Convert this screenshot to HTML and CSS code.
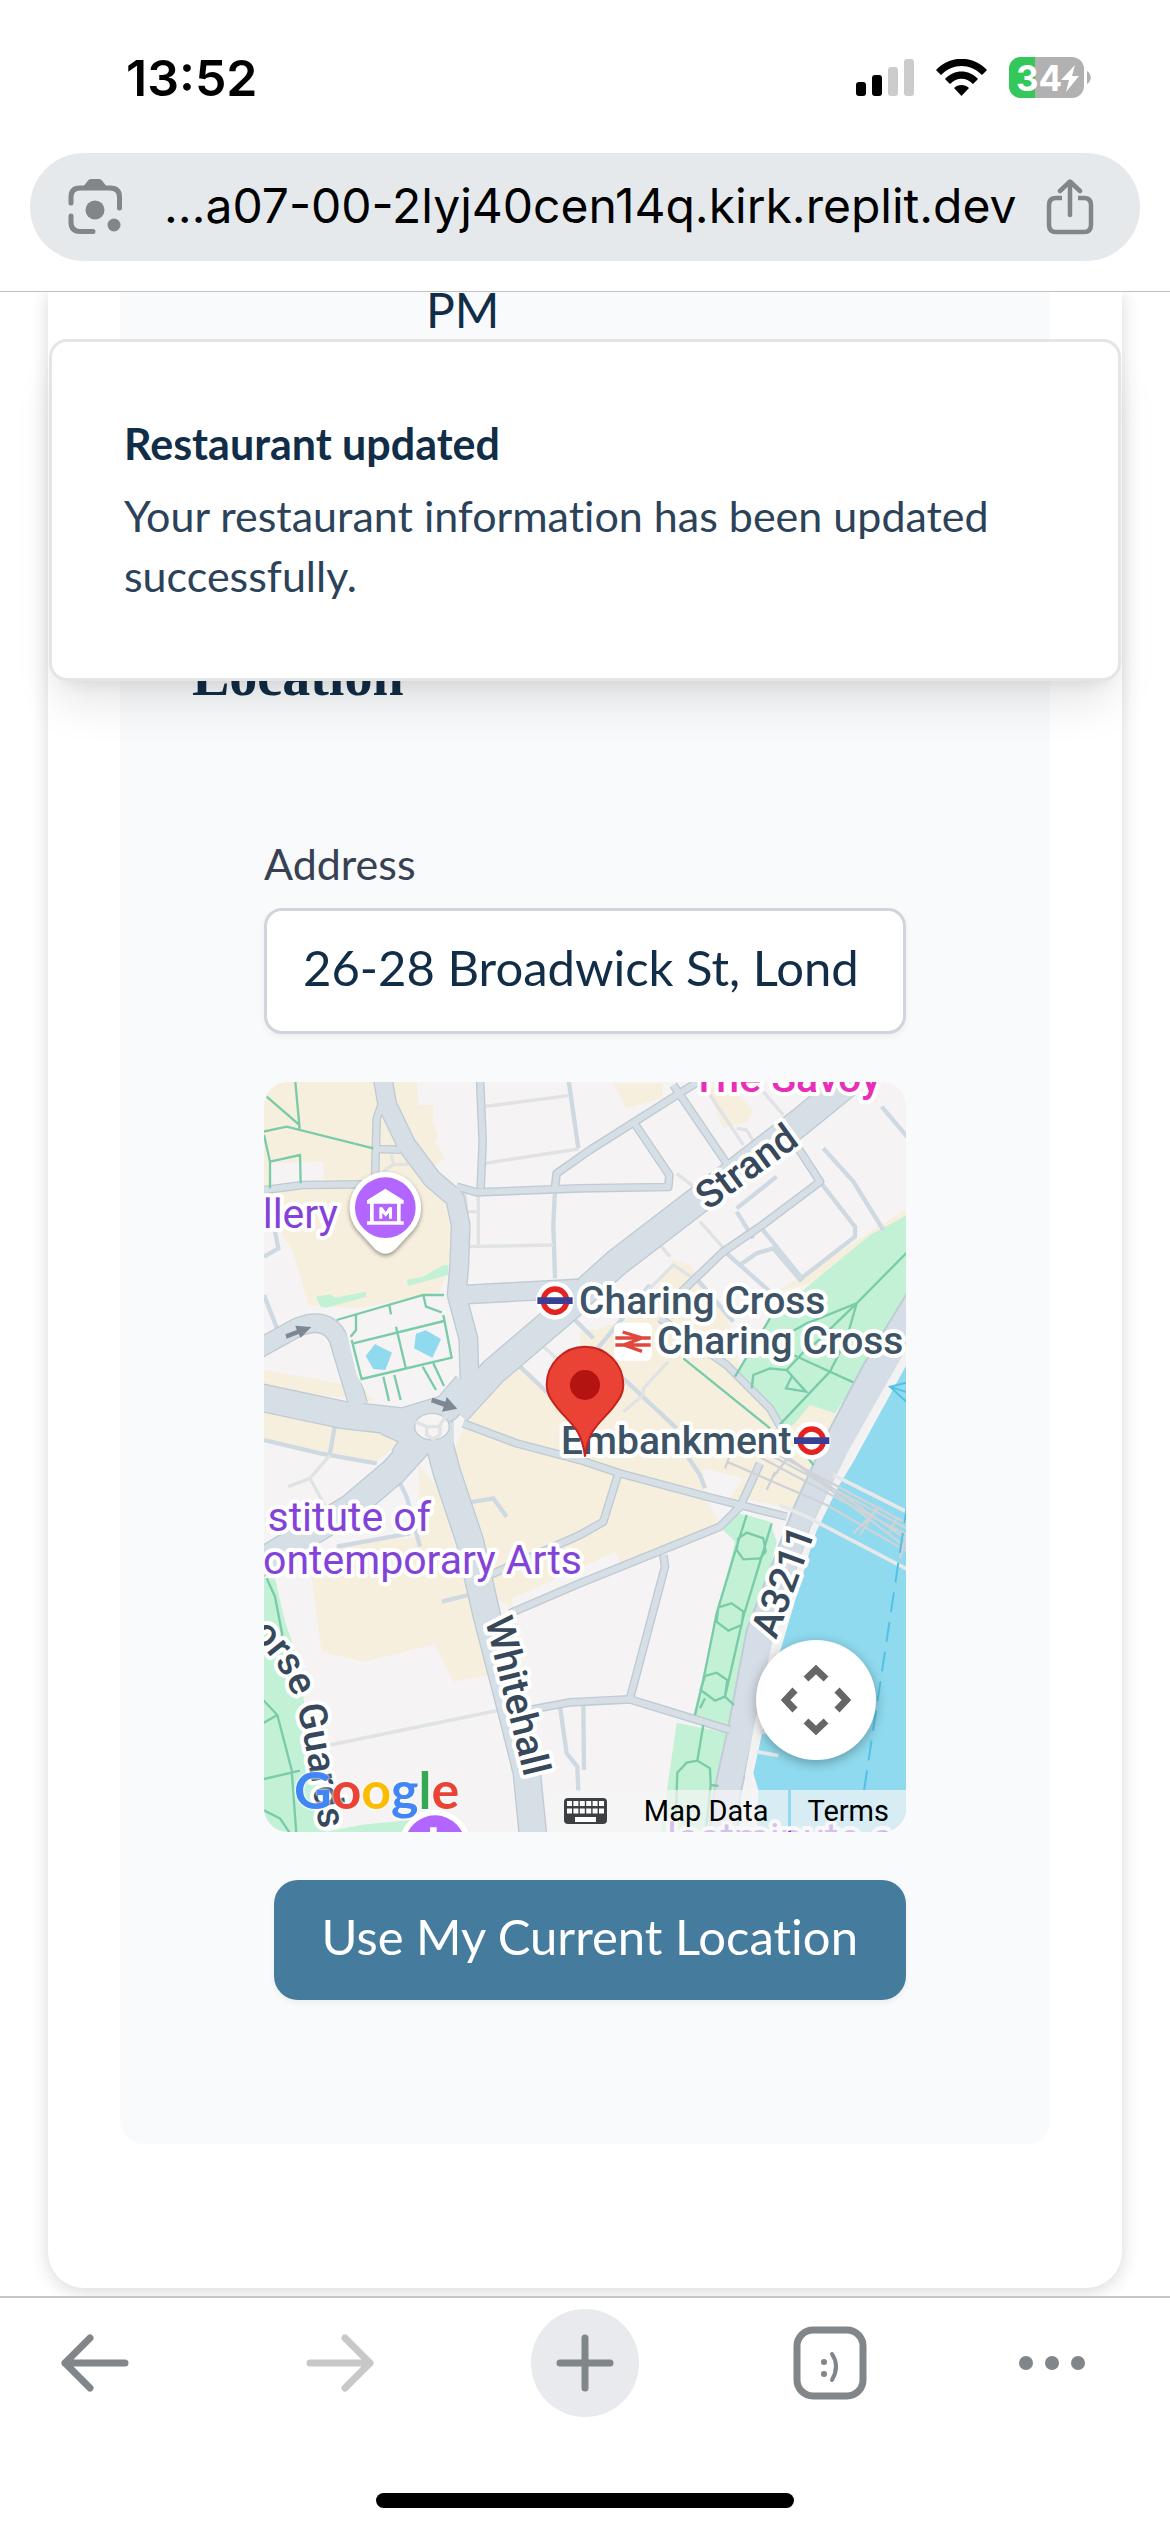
FILE: index.html
```
<!DOCTYPE html>
<html lang="en">
<head>
<meta charset="utf-8">
<meta name="viewport" content="width=device-width, initial-scale=1">
<title>Restaurant settings</title>
<link rel="stylesheet" href="styles.css">
</head>
<body>
<div class="screen">
  <header class="top">
    <div class="status">
      <time class="clock">13:52</time>
      <div class="status-icons">
        <svg width="58" height="38" viewBox="0 0 58 38" aria-label="Signal">
          <rect x="0" y="23" width="10" height="14" rx="3"/><rect x="16" y="16" width="10" height="21" rx="3"/>
          <rect x="32" y="8" width="10" height="29" rx="3" fill="#cccccc"/><rect x="48" y="0" width="10" height="37" rx="3" fill="#cccccc"/>
        </svg>
        <svg width="51" height="38" viewBox="0 0 51 38" aria-label="Wi-Fi">
          <path d="M0 11C14-4 37-4 51 11L46 16C34 4 17 4 5 16Z"/>
          <path d="M9 20C18 10 33 10 42 20L37 25C30 18 21 18 14 25Z"/>
          <path d="M18 29C22 25 29 25 33 29L25.500 37Z"/>
        </svg>
        <svg width="82" height="42" viewBox="0 0 82 42" aria-label="Battery 34 percent">
          <defs><clipPath id="cell"><rect width="75" height="41" rx="12"/></clipPath></defs>
          <g clip-path="url(#cell)"><rect width="75" height="41" fill="#b1b1b1"/><rect width="26" height="41" fill="#34c759"/></g>
          <path d="M78 14C83 17 83 24 78 27Z" fill="#b1b1b1"/>
          <text class="charge" x="7" y="34">34</text>
          <path d="M66 8L52 23H60L57 35L70 19H63Z" fill="#fff"/>
        </svg>
      </div>
    </div>
    <div class="address-bar">
      <button class="icon-button" type="button" aria-label="Search with camera">
        <svg width="54" height="56" viewBox="0 0 54 56" fill="none" stroke="#80868a" stroke-width="5" stroke-linecap="round">
          <path d="M3 24V18Q3 9 12 9H42Q51.500 9 51.500 18V29M3 37V43Q3 52.500 12 52.500H25"/>
          <path d="M15 8L20 1.500Q21 0 23 0H31Q33 0 34 1.500L39 8Z" fill="#80868a" stroke="none"/>
          <circle cx="27" cy="31" r="9.500" fill="#80868a" stroke="none"/><circle cx="46" cy="46" r="6.500" fill="#80868a" stroke="none"/>
        </svg>
      </button>
      <input class="url" type="text" aria-label="Address and search bar" value="…a07-00-2lyj40cen14q.kirk.replit.dev" readonly>
      <button class="icon-button" type="button" aria-label="Share">
        <svg width="48" height="57" viewBox="0 0 48 57" fill="none" stroke="#80868a" stroke-width="4.500">
          <path d="M16 19H10Q3 19 3 26V46Q3 53 10 53H38Q45 53 45 46V26Q45 19 38 19H32"/>
          <path d="M24 36V4M14 12L24 2.500L34 12" stroke-linecap="round" stroke-linejoin="round"/>
        </svg>
      </button>
    </div>
  </header>

  <main class="page">
    <div class="toast" role="status">
      <strong class="toast-title">Restaurant updated</strong>
      <p class="toast-text">Your restaurant information has been updated successfully.</p>
    </div>
    <section class="card">
      <div class="panel">
        <p class="hours">PM</p>
        <h2 class="heading">Location</h2>
        <form class="form">
          <div class="field">
            <label class="label" for="address">Address</label>
            <input class="input" id="address" type="text" value="26-28 Broadwick St, Lond">
          </div>
          <div class="map">
            <svg class="map-art" viewBox="4 7 642 750" preserveAspectRatio="xMidYMid slice" role="img" aria-label="Map of Charing Cross">
              <defs>
                <g id="roads" fill="none" stroke-linejoin="round" stroke-linecap="butt">
                  <g class="r1">
                    <path d="M368 10L382 90L440 210L515 310L585 370L602 450L598 570L590 660L625 790L630 960"/>
                    <path d="M590 660L960 640"/>
                    <path d="M-20 830L110 758Q200 720 235 790L295 990"/>
                  </g>
                  <g class="r2">
                    <path d="M590 1010L700 890L960 668"/><path d="M940 680L1070 563L1620 141L1780 10"/>
                    <path d="M520 1040L560 1190L630 1400L680 1620L750 1890L800 2090L820 2290"/>
                    <path d="M500 1080L400 1190L270 1300L-10 1470"/><path d="M470 1090L430 1150"/>
                    <path d="M-10 965L250 1020L430 1040L560 1000L620 930"/><path d="M380 1040L470 1080L580 1080"/>
                  </g>
                  <g class="r3">
                    <path d="M345 310L350 130L375 60M660 10L668 200L662 340M590 335L650 352L960 340L1225 336L1228 300L1120 140M885 335L890 295L990 225L1330 10M1240 30L1400 265M1615 220L1680 320L1500 455L1390 530L1265 650M-10 348L130 330L310 328M345 222L420 224"/>
                    <path d="M1200 730L1400 870L1530 1000L1570 1070M610 1045L770 1105L960 1155L1080 1195L1340 1265L1580 1325M1075 1195L1030 1340L960 1380L690 1500M1500 1165L1440 1295L1380 1355L960 1525L750 1615M1210 1440L1215 1475L1110 1870M780 1910L930 1882L1110 1873L1410 1965"/>
                  </g>
                </g>
              </defs>
              <g transform="scale(.333333)">
                <path class="land" d="M0 0H1950V2300H0Z"/>
                <path class="sand" d="M0 0H470L475 90H520V140L535 185L525 200L555 250L520 275L575 450L570 570L540 650L300 700L145 690L120 600L95 520L65 480L60 350L0 345Z"/>
                <path class="land" d="M30 265L190 260V320L40 335Z"/>
                <path class="sand" d="M12 885L350 945L340 980L12 940ZM0 1005L360 1075L430 1090L340 1170L0 1100Z"/>
                <path class="sand" d="M770 865L850 940L960 900L960 780L1140 720L1240 555L1290 570L1400 720L1440 880L1560 1040L1660 980L1730 1010L1600 1300L1440 1270L1370 1310L1375 1350L1080 1465L1065 1430L960 1480L755 1570L760 1600L690 1560L560 1180L600 1080L640 1020Z"/>
                <path class="sand" d="M475 1170L530 1235L620 1525L690 1800L580 1820L525 1708L310 1760L185 1730L155 1510L240 1410L480 1385Z"/>
                <path class="sand" d="M1060 25H1210L1205 70L1100 100ZM1340 40L1400 30L1480 105L1460 140L1390 160ZM1950 395L1550 650L1660 625L1950 430ZM955 770L1000 760L1020 800L980 810ZM250 1125H340V1150H250Z"/>
                <path class="land" d="M1330 1180L1450 1210L1370 1330L1330 1260ZM1190 1070L1290 1050L1330 1110L1220 1130Z"/>
                <path class="park" d="M1950 415L1830 480L1660 620L1540 720L1425 910L1535 1010L1560 1060L1600 1050L1650 990L1725 1015L1830 860L1950 680Z"/>
                <path class="park" d="M1420 1310L1390 1365L1425 1400L1300 1920L1410 1960L1550 1400L1530 1340ZM1250 1943L1405 1975L1340 2290H1200Z"/>
                <path class="park" d="M0 1510H45L75 1640L110 1740L135 1900L170 2030L200 2280H0ZM200 2270L300 2250L450 2235V2290H200ZM168 665L210 658L225 668L318 650V665L200 698L182 695ZM440 615L490 605L550 570H565V600L445 633Z"/>
                <path class="thin" d="M12 545L55 520L45 470M925 10L955 220M885 345L880 450L885 610M1430 410L1480 490M1550 305L1430 400M1505 460L1630 615M1630 605L1785 485V455L1680 320M1440 570L1490 535L1540 520L1625 620M1400 535L1530 650M1865 95L1950 195M12 1095L180 1135L350 1165M225 1050L210 1135M610 1285L700 1270L740 1325M545 1580L625 1560M230 1415L450 1375M420 1225L440 1265L480 1415M900 1895L920 2035L952 2075L955 2150M970 1890L972 2085M12 660L55 770M770 865L870 960M1690 220L1780 320L1870 465M1090 910L1250 1060M1170 630L980 860M1080 1070L1140 1125M1270 1125L1320 1200L1335 1240M940 730L1000 790M1300 600L1420 740"/>
                <path class="alley" d="M670 95L925 62M675 265L955 222M620 515L880 510M655 350V515M615 350L620 410H655M1320 440L1400 530M1350 60L1450 210M1510 50L1570 120M1200 510L1230 545M1160 650L1240 570L1300 610M1225 860L1150 940V960L1090 1010M210 2010L720 1905M85 1235L150 1210L220 1340M150 1210L210 1140M840 805L900 860M395 240L400 268H445M370 290L400 268M1250 295L1320 350M1430 160L1460 165L1480 200"/>
                <path class="water" d="M1950 850L1780 1160L1680 1325L1560 1730L1480 2095L1495 2145L1490 2290H1950Z"/>
                <path class="quay" d="M1950 640L1810 870L1705 1070L1600 1300L1460 1665L1405 1955L1365 2135L1345 2290H1430L1440 2165L1485 1955L1540 1695L1650 1365L1770 1125L1950 810Z"/>
                <path class="bank" d="M1950 822L1775 1130L1660 1365L1548 1695L1492 1955L1465 2100V2290"/>
                <use href="#roads" class="casing"/>
                <use href="#roads" class="fill"/>
                <path class="land" d="M250 735L490 665H555L590 850L560 930L470 965L330 970L290 900Z"/>
                <ellipse cx="516" cy="1055" rx="52" ry="40" fill="#f5f3f4" stroke="#bfcad2" stroke-width="4"/>
                <path class="alley" d="M466 1040L500 1055L500 1080L520 1092L540 1078V1050L560 1020M500 1055H540"/>
                <path class="pool" d="M345 807L396 833L376 885L340 882L317 843ZM497 766L543 792L517 848L462 820L468 776Z"/>
                <path class="walk" d="M105 10L118 150L20 65M118 150V165M0 172L80 155L340 220M12 180L30 260V340M30 260L120 240L122 325M230 735L490 660H552M280 805L552 738M275 795L305 912L575 848L550 720M408 755L438 882M370 905L387 978M403 900L422 975M488 875L528 945M520 865L552 933M388 690L393 718M288 718V765L272 785M490 660L498 695L545 712"/>
                <path class="walk" d="M1950 523L1790 685L1640 745L1560 790M1790 685L1650 820M1790 685L1760 790L1710 890L1560 1048M1600 840L1780 922M1270 850L1530 1060M1530 730L1425 905M1475 940L1480 900L1530 880L1580 885L1638 950L1578 940L1595 905M1580 885L1660 800M1600 1090L1660 1170"/>
                <path class="walk" d="M1460 1320L1430 1415L1370 1615L1330 1815L1305 1920M1535 1345L1505 1445L1450 1625L1395 1865M1460 1373L1510 1390L1517 1430L1500 1450L1450 1453L1430 1425L1435 1390ZM1415 1585L1450 1610L1445 1650L1405 1667L1370 1640L1375 1597ZM1370 1793L1402 1815L1395 1865L1365 1877L1322 1845L1335 1803ZM1335 1870L1320 1900M1395 1865L1422 1890M1330 1950L1312 2057L1350 2080L1352 2130L1375 2133M1312 2057L1280 2063L1252 2093L1245 2290M1352 2130L1335 2290"/>
                <path class="walk" d="M20 1510L45 1565L70 1695M0 1865L52 1920L95 2085L110 2290M0 1950L52 1920M0 2115L120 2087M0 2200L60 2230L100 2290"/>
                <path class="rail" d="M1450 1120L1950 1385M1475 1110L1950 1365M1500 1110L1950 1350M1530 1110L1950 1400M1560 1130L1950 1425M1400 1160L1700 1290L1950 1435M1395 1180L1410 1140M1520 1245L1545 1190M1540 1205L1590 1140M1780 1375L1860 1295M1800 1380L1850 1300M1890 1370L1910 1330M1920 1450L1940 1380"/>
                <path class="bridge" d="M1720 1200L1950 1315M1560 1290L1640 1325L1950 1487M1490 2030L1555 2042M1500 1970L1540 1975"/>
                <path d="M1942 1285L1810 2160" fill="none" stroke="#54c1e4" stroke-width="6" stroke-dasharray="60 30"/>
                <path d="M1950 920L1890 935L1950 990M1890 935L1950 955" fill="none" stroke="#54c1e4" stroke-width="6"/>
                <path fill="#7d8893" d="M76 778L110 765L106 752L154 756L122 788L116 777L80 791ZM517 968L556 980L560 966L592 1001L546 1010L551 995L513 982Z"/>
                <g class="pin-shadow">
                  <path d="M376 291A107 107 0 0 0 290 462L345 522Q376 550 407 522L462 462A107 107 0 0 0 376 291Z" fill="#fff"/>
                </g>
                <circle cx="376" cy="398" r="91" fill="#b366ff"/>
                <path d="M376 341L431 376V386H321V376ZM321 439H431V449H321ZM330 386H341V439H330ZM411 386H422V439H411ZM358 431V397H367L377 411L387 397H396V431H387V413L377 425L367 413V431Z" fill="#fff"/>
                <circle cx="525" cy="2312" r="108" fill="#fff"/><circle cx="525" cy="2312" r="91" fill="#b366ff"/><path d="M510 2257H530V2280H510Z" fill="#fff"/>
                <g id="tube"><circle cx="885" cy="677" r="57" fill="#fff"/><circle cx="885" cy="677" r="35" fill="none" stroke="#e5221f" stroke-width="16"/><path d="M832 667H938V687H832Z" fill="#393f94"/></g>
              </g>
              <g class="labels">
                <text class="place" x="78" y="153" text-anchor="end">llery</text>
                <text class="place" x="171" y="456" text-anchor="end">stitute of</text>
                <text class="place" x="322" y="499" text-anchor="end">ontemporary Arts</text>
                <text class="place" x="407" y="777">lastminute.com</text>
                <text class="hotel" x="621" y="17" text-anchor="end">The Savoy</text>
                <text class="station" x="319" y="239">Charing Cross</text>
                <text class="station" x="397" y="279">Charing Cross</text>
                <text class="station" x="301" y="379">Embankment</text>
                <text class="street" transform="translate(448 136) rotate(-36)">Strand</text>
                <text class="street" transform="translate(225 545) rotate(76)">Whitehall</text>
                <text class="street" transform="translate(516 565) rotate(-70)">A3211</text>
                <path id="guards" d="M-10 560C12 580 28 602 37 632C46 667 50 700 66 790" fill="none"/>
                <text class="street"><textPath href="#guards">orse Guards Rd</textPath></text>
              </g>
              <g transform="scale(.333333)">
                <use href="#tube" x="770" y="420"/>
                <rect x="1062" y="743" width="114" height="114" rx="18" fill="#fff"/>
                <path d="M1066 789H1172M1066 810H1172M1088 771L1146 789L1092 810L1146 829" fill="none" stroke="#e0483e" stroke-width="10"/>
                <path d="M975 1145C965 1060 930 1045 893 1000C870 970 860 955 860 930A115 115 0 0 1 1090 930C1090 955 1080 970 1057 1000C1020 1045 985 1060 975 1145Z" fill="#ea4335" stroke="#c5221f" stroke-width="6"/>
                <circle cx="975" cy="930" r="45" fill="#b31412"/>
              </g>
            </svg>
            <span class="brand" aria-label="Google"><span class="g-blue">G</span><span class="g-red">o</span><span class="g-yellow">o</span><span class="g-blue">g</span><span class="g-green">l</span><span class="g-red">e</span></span>
            <button class="camera" type="button" aria-label="Map camera controls">
              <svg width="70" height="70" viewBox="0 0 70 70" fill="none" stroke="#666" stroke-width="7">
                <path d="M25 14L35 4.500L45 14M25 56L35 65.500L45 56M14 25L4.500 35L14 45M56 25L65.500 35L56 45"/>
              </svg>
            </button>
            <div class="credits">
              <div class="credit-group">
                <button class="credit" type="button" aria-label="Keyboard shortcuts">
                  <svg width="43" height="26" viewBox="0 0 43 26"><rect width="43" height="26" rx="4" fill="#3c4043"/><path d="M3 5.500H40M3 13H40" stroke="#fff" stroke-width="5" stroke-dasharray="5 1.400"/><path d="M11 21.500H32" stroke="#fff" stroke-width="5"/></svg>
                </button>
                <button class="credit" type="button">Map Data</button>
              </div>
              <a class="credit-group terms" href="#terms">Terms</a>
            </div>
          </div>
          <button class="locate" type="button">Use My Current Location</button>
        </form>
      </div>
    </section>
  </main>

  <nav class="toolbar" aria-label="Browser">
    <div class="tools">
      <button class="tool" type="button" aria-label="Back"><svg width="68" height="58" viewBox="0 0 68 58"><path d="M64 29H4M29 4L4 29L29 54"/></svg></button>
      <button class="tool tool-off" type="button" aria-label="Forward"><svg width="68" height="58" viewBox="0 0 68 58"><path d="M4 29H64M39 4L64 29L39 54"/></svg></button>
      <button class="tool tool-new" type="button" aria-label="New tab"><svg width="58" height="58" viewBox="0 0 58 58"><path d="M4 29H54M29 4V54"/></svg></button>
      <button class="tool" type="button" aria-label="Tabs"><svg width="74" height="74" viewBox="0 0 74 74"><rect x="4" y="4" width="66" height="66" rx="16"/><g stroke-width="4"><path d="M39 28Q47 40 39 54"/></g><circle class="dot" cx="31" cy="36" r="3"/><circle class="dot" cx="31" cy="48" r="3"/></svg></button>
      <button class="tool" type="button" aria-label="More"><svg width="68" height="16" viewBox="0 0 68 16"><circle class="dot" cx="8" cy="8" r="7"/><circle class="dot" cx="34" cy="8" r="7"/><circle class="dot" cx="60" cy="8" r="7"/></svg></button>
    </div>
    <div class="home"></div>
  </nav>
</div>
</body>
</html>
```
FILE: styles.css
```
* { box-sizing: border-box; }
body { margin: 0; background: #fff; font-family: Lato, "Open Sans", sans-serif; color: #112d47; }
button, input { margin: 0; padding: 0; border: 0; background: none; font: inherit; color: inherit; }
svg { display: block; }
p, h2 { margin: 0; }

.screen { display: flex; flex-direction: column; min-height: 100vh; }

/* Browser header */
.top { padding: 48px 30px 30px; border-bottom: 1px solid #c0c0c0; font-family: Inter, sans-serif; color: #000; }
.status { display: flex; justify-content: space-between; padding: 0 49px 0 96px; margin-bottom: 45px; }
.clock { font-size: 50px; line-height: 60px; font-weight: 600; }
.status-icons { display: flex; align-items: center; gap: 22px; }
.charge { font: 700 35px Inter, sans-serif; fill: #fff; }
.address-bar { display: flex; align-items: center; height: 108px; padding: 0 46px 0 38px; border-radius: 54px; background: #e6e9ec; }
.icon-button { flex: none; }
.url { flex: 1; min-width: 0; height: 60px; margin: 0 12px 0 42px; padding-bottom: 4px; font-size: 48px; }

/* Page */
.page { position: relative; flex: 1; padding: 0 48px 8px; overflow: hidden; }
.card { padding: 0 72px 144px; border-radius: 0 0 36px 36px; background: #fff; box-shadow: 0 3px 18px rgba(0, 0, 0, .16); }
.panel { padding: 0 72px 144px; border-radius: 0 0 24px 24px; background: #f9fafc; }
.hours { padding-left: 234px; font-size: 48px; line-height: 36px; }
.heading { margin: 316px 0 126px; font: 700 56px/64px "Liberation Serif", serif; }
.form { display: flex; flex-direction: column; gap: 48px; padding: 0 72px; }
.field { display: flex; flex-direction: column; gap: 14px; }
.label { font-size: 43px; line-height: 60px; color: #374151; }
.input { width: 100%; height: 126px; padding: 0 36px 8px; border: 3px solid #d1d5db; border-radius: 18px; background: #fff; font-size: 49px; box-shadow: 0 3px 6px rgba(0, 0, 0, .05); }
.locate { align-self: flex-end; height: 120px; padding: 0 48px 8px; border-radius: 24px; background: #457b9d; color: #fff; font-size: 49px; font-variant-ligatures: none; box-shadow: 0 3px 6px rgba(0, 0, 0, .05); }

/* Toast */
.toast { position: absolute; top: 47px; left: 49px; right: 49px; padding: 72px; border: 3px solid #e5e5e5; border-radius: 18px; background: #fff; box-shadow: 0 30px 45px -9px rgba(0, 0, 0, .1), 0 12px 18px -12px rgba(0, 0, 0, .1); font-size: 43px; line-height: 60px; font-variant-ligatures: none; }
.toast-title { display: block; margin-bottom: 12px; font-weight: 700; }
.toast-text { color: #2b4259; }

/* Map */
.map { position: relative; height: 750px; border-radius: 24px; overflow: hidden; font-family: Roboto, sans-serif; }
.map-art { width: 100%; height: 100%; }
.land { fill: #f5f3f4; }
.sand { fill: #f7efde; }
.park { fill: #c3f1d5; }
.water, .pool { fill: #8fdaee; }
.quay { fill: #d5dde6; stroke: #c1ccd6; stroke-width: 6; }
.bank { fill: none; stroke: #f3f2f3; stroke-width: 20; }
.walk { fill: none; stroke: #79cba9; stroke-width: 7; }
.thin { fill: none; stroke: #cfd9e1; stroke-width: 13; }
.alley { fill: none; stroke: #e0e2e4; stroke-width: 10; }
.rail { fill: none; stroke: #cfd3d7; stroke-width: 7; }
.bridge { fill: none; stroke: #e6e8ea; stroke-width: 11; }
.casing { stroke: #bfcad2; --edge: 8px; }
.fill { stroke: #d6dfe6; --edge: 0px; }
.r1 { stroke-width: calc(52px + var(--edge)); }
.r2 { stroke-width: calc(78px + var(--edge)); }
.r3 { stroke-width: calc(18px + var(--edge)); }
.pin-shadow { filter: drop-shadow(0 6px 6px rgba(0, 0, 0, .4)); }
.labels text { stroke: #fff; stroke-width: 8px; stroke-linejoin: round; paint-order: stroke; font-size: 39px; }
.labels .place { fill: #8343d9; font-size: 41px; }
.labels .hotel { fill: #e92fb8; font-size: 41px; font-weight: 500; }
.labels .station { fill: #3d5366; font-weight: 500; }
.labels .street { fill: #36485a; font-weight: 500; }
.brand { position: absolute; left: 30px; bottom: 11px; font: 700 52px/64px Lato, sans-serif; text-shadow: 0 0 3px #fff, 0 0 3px #fff; }
.g-blue { color: #4285f4; }
.g-red { color: #ea4335; }
.g-yellow { color: #fbbc04; }
.g-green { color: #34a853; }
.camera { position: absolute; right: 30px; bottom: 72px; display: grid; place-items: center; width: 120px; height: 120px; border-radius: 50%; background: #fff; box-shadow: 0 3px 12px rgba(0, 0, 0, .3); }
.credits { position: absolute; right: 0; bottom: 0; display: flex; gap: 3px; height: 42px; font-size: 29px; line-height: 42px; color: #000; }
.credit-group { display: flex; align-items: center; gap: 37px; padding: 0 20px 0 14px; background: rgba(245, 245, 245, .7); }
.terms { padding: 0 17px 0 16px; color: inherit; text-decoration: none; }

/* Browser toolbar */
.toolbar { display: flex; flex-direction: column; gap: 76px; padding-bottom: 24px; border-top: 2px solid #c8c8c8; }
.tools { display: grid; grid-template-columns: 245fr 245fr 245fr 222fr 172fr; padding: 11px 0 0 41px; }
.tool { display: grid; place-items: center; width: 108px; height: 108px; border-radius: 50%; }
.tool svg { fill: none; stroke: #80868a; stroke-width: 7; stroke-linecap: round; stroke-linejoin: round; }
.tool .dot { fill: #80868a; stroke: none; }
.tool-off svg { stroke: #c8c8c8; }
.tool-new { background: #e8eaed; }
.home { align-self: center; width: 418px; height: 15px; border-radius: 8px; background: #000; }
```
